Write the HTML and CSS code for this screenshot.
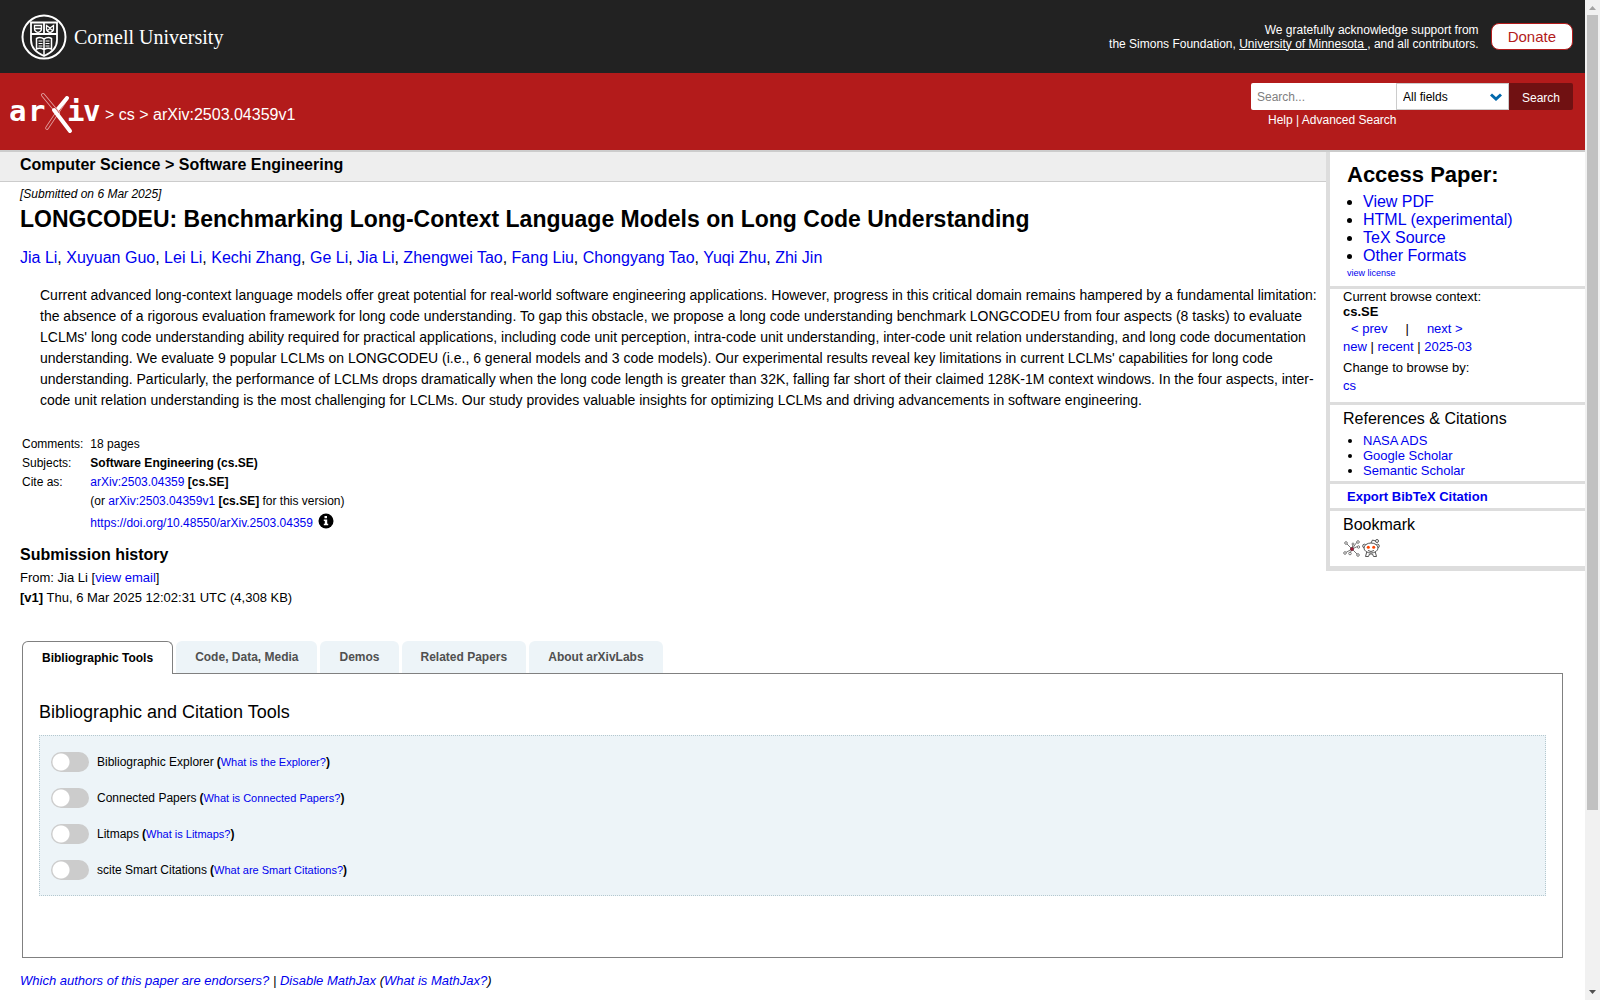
FILE: index.html
```
<!DOCTYPE html>
<html lang="en">
<head>
  <meta charset="UTF-8">
  <meta name="viewport" content="width=device-width, initial-scale=1.0">
  <title>[2503.04359v1] LONGCODEU: Benchmarking Long-Context Language Models on Long Code Understanding</title>
  <link rel="stylesheet" href="styles.css">
</head>
<body>
  <header>
    <div class="support-bar">
      <a class="cornell" href="#">
        <svg class="seal" viewBox="0 0 46 46" aria-hidden="true">
          <g fill="none" stroke="#fff">
            <circle cx="23" cy="23" r="21.500" stroke-width="2"/>
            <path d="M10 8.500H36V26C36 34 30 39 23 42C16 39 10 34 10 26Z" stroke-width="1.800"/>
            <path d="M10 20H36M23 9V20" stroke-width="1.800"/>
            <path d="M13.500 11.500H20.500V15Q20.500 17.500 17 18.500Q13.500 17.500 13.500 15ZM25.500 11.500L29 14L32.500 11.500V15Q32.500 17.500 29 18.500Q25.500 17.500 25.500 15ZM14 14.500H20M26.500 16.500L29 14.500L31.500 16.500" stroke-width="1.300"/>
            <path d="M23 25Q19 22.500 15.500 24.500V35Q19 33.500 23 35.500Q27 33.500 30.500 35V24.500Q27 22.500 23 25V41" stroke-width="1.500"/>
            <path d="M17.500 27H21.500M17.500 29.500H21.500M17.500 32H21.500M24.500 27H28.500M24.500 29.500H28.500M24.500 32H28.500"/>
          </g>
        </svg>
        <span>Cornell University</span>
      </a>
      <div class="support">
        <p>We gratefully acknowledge support from<br>the Simons Foundation, <a href="#">University of Minnesota </a>, and all contributors.</p>
        <a class="donate" href="#">Donate</a>
      </div>
    </div>
    <div class="brand-bar">
      <div class="breadcrumbs">
        <a href="#" aria-label="arXiv">
          <svg class="logo" viewBox="0 4 92 46" aria-hidden="true">
            <g class="logo-text">
              <text x="-1" y="33">a</text>
              <text x="18" y="33">r</text>
              <text x="57" y="33">i</text>
              <text x="73" y="33">v</text>
            </g>
            <g fill="none" stroke-linecap="round">
              <path d="M57 10L37 40" stroke="#e3a3a3" stroke-width="3.600"/>
              <path d="M57 10L37 40" stroke="#b31b1b" stroke-width="2"/>
              <path d="M57 10L47 22" stroke="#fff" stroke-width="4"/>
              <path d="M33 7L48 25" stroke="#e3a3a3" stroke-width="4"/>
              <path d="M33 7L48 25" stroke="#b31b1b" stroke-width="2.200"/>
              <path d="M44 22L60 43" stroke="#fff" stroke-width="4"/>
            </g>
          </svg>
        </a>
        <span>&gt; <a href="#">cs</a> &gt; arXiv:2503.04359v1</span>
      </div>
      <form class="search">
        <div class="search-row">
          <input type="text" placeholder="Search..." aria-label="Search term or terms">
          <div class="select">
            <select aria-label="Field to search">
              <option>All fields</option>
              <option>Title</option>
              <option>Author</option>
              <option>Abstract</option>
            </select>
            <svg viewBox="0 0 12 8" aria-hidden="true"><path d="M1 1.500L6 6L11 1.500" fill="none" stroke="#0068ac" stroke-width="3"/></svg>
          </div>
          <button type="button">Search</button>
        </div>
        <p><a href="#">Help</a> | <a href="#">Advanced Search</a></p>
      </form>
    </div>
  </header>

  <main>
    <div class="columns">
      <article>
        <h1 class="subject">Computer Science &gt; Software Engineering</h1>
        <div class="abs">
          <div class="dateline">[Submitted on 6 Mar 2025]</div>
          <h1 class="title">LONGCODEU: Benchmarking Long-Context Language Models on Long Code Understanding</h1>
          <div class="authors"><a href="#">Jia Li</a>, <a href="#">Xuyuan Guo</a>, <a href="#">Lei Li</a>, <a href="#">Kechi Zhang</a>, <a href="#">Ge Li</a>, <a href="#">Jia Li</a>, <a href="#">Zhengwei Tao</a>, <a href="#">Fang Liu</a>, <a href="#">Chongyang Tao</a>, <a href="#">Yuqi Zhu</a>, <a href="#">Zhi Jin</a></div>
          <blockquote>Current advanced long-context language models offer great potential for real-world software engineering applications. However, progress in this critical domain remains hampered by a fundamental limitation: the absence of a rigorous evaluation framework for long code understanding. To gap this obstacle, we propose a long code understanding benchmark LONGCODEU from four aspects (8 tasks) to evaluate LCLMs' long code understanding ability required for practical applications, including code unit perception, intra-code unit understanding, inter-code unit relation understanding, and long code documentation understanding. We evaluate 9 popular LCLMs on LONGCODEU (i.e., 6 general models and 3 code models). Our experimental results reveal key limitations in current LCLMs' capabilities for long code understanding. Particularly, the performance of LCLMs drops dramatically when the long code length is greater than 32K, falling far short of their claimed 128K-1M context windows. In the four aspects, inter-code unit relation understanding is the most challenging for LCLMs. Our study provides valuable insights for optimizing LCLMs and driving advancements in software engineering.</blockquote>
          <table class="meta">
            <tr><td>Comments:</td><td>18 pages</td></tr>
            <tr><td>Subjects:</td><td><b>Software Engineering (cs.SE)</b></td></tr>
            <tr><td>Cite as:</td><td><a href="#">arXiv:2503.04359</a> <b>[cs.SE]</b></td></tr>
            <tr><td></td><td>(or <a href="#">arXiv:2503.04359v1</a> <b>[cs.SE]</b> for this version)</td></tr>
            <tr><td></td><td><a href="#">https://doi.org/10.48550/arXiv.2503.04359</a>
              <svg class="info" viewBox="0 0 16 16" aria-hidden="true"><circle cx="8" cy="8" r="7.500"/><path d="M6.500 3H9V5.200H6.500ZM5.800 6.500H9.200V10.800H10.200V12.300H5.800V10.800H6.800V8H5.800Z" fill="#fff"/></svg>
            </td></tr>
          </table>
          <section class="history">
            <h2>Submission history</h2>
            <p>From: Jia Li [<a href="#">view email</a>]</p>
            <p><b>[v1]</b> Thu, 6 Mar 2025 12:02:31 UTC (4,308 KB)</p>
          </section>
        </div>
      </article>

      <aside>
        <section class="access">
          <h2>Access Paper:</h2>
          <ul>
            <li><a href="#">View PDF</a></li>
            <li><a href="#">HTML (experimental)</a></li>
            <li><a href="#">TeX Source</a></li>
            <li><a href="#">Other Formats</a></li>
          </ul>
          <a class="license" href="#">view license</a>
        </section>
        <section class="browse">
          <div>Current browse context:</div>
          <b>cs.SE</b>
          <div class="prevnext"><a href="#">&lt; prev</a><span>|</span><a href="#">next &gt;</a></div>
          <div class="list-links"><a href="#">new</a> | <a href="#">recent</a> | <a href="#">2025-03</a></div>
          <div class="switch">Change to browse by:</div>
          <a href="#">cs</a>
        </section>
        <section class="refs">
          <h3>References &amp; Citations</h3>
          <ul>
            <li><a href="#">NASA ADS</a></li>
            <li><a href="#">Google Scholar</a></li>
            <li><a href="#">Semantic Scholar</a></li>
          </ul>
        </section>
        <section class="export"><a href="#">Export BibTeX Citation</a></section>
        <section class="bookmark">
          <h3>Bookmark</h3>
          <div class="bookmark-icons">
            <a href="#" aria-label="Bookmark on BibSonomy">
              <svg viewBox="0 0 18 18" fill="none" stroke="#777"><path d="M3 4L9 10L15 16M2 14L9 10L14 3M7 14.500L9 10L15.500 7M10 5L9 10"/><g fill="#fff"><circle cx="3" cy="4" r="1.300"/><circle cx="15" cy="3" r="1.300"/><circle cx="2" cy="14" r="1.300"/><circle cx="7" cy="14.500" r="1.300"/><circle cx="15" cy="16" r="1.300"/><circle cx="10" cy="5" r="1"/><circle cx="15.500" cy="8" r="1.200"/></g><circle cx="9" cy="10" r="1.500" fill="#b13" stroke="#734"/></svg>
            </a>
            <a href="#" aria-label="Bookmark on Reddit">
              <svg viewBox="0 0 18 18" fill="#fff" stroke="#555"><path d="M5 12L3.500 17.500H6.500L7.500 15H10.500L11.500 17.500H14.500L13 12M9 4L10.500 1L13.500 2"/><circle cx="2.500" cy="7" r="1.800"/><circle cx="15.500" cy="7" r="1.800"/><circle cx="15" cy="2" r="1.500"/><ellipse cx="9" cy="9" rx="7" ry="5"/><path d="M6 11.500Q9 13.500 12 11.500" fill="none"/><g fill="#f40" stroke="none"><circle cx="6.300" cy="8.300" r="1.500"/><circle cx="11.700" cy="8.300" r="1.500"/></g></svg>
            </a>
          </div>
        </section>
      </aside>
    </div>

    <div class="labs">
      <div class="tabs" role="tablist">
        <button class="active" role="tab" aria-selected="true">Bibliographic Tools</button>
        <button role="tab">Code, Data, Media</button>
        <button role="tab">Demos</button>
        <button role="tab">Related Papers</button>
        <button role="tab">About arXivLabs</button>
      </div>
      <div class="tab-panel">
        <h2>Bibliographic and Citation Tools</h2>
        <div class="toggles">
          <div class="toggle"><input type="checkbox" id="bibex"><label for="bibex">Bibliographic Explorer</label> <b>(</b><a href="#">What is the Explorer?</a><b>)</b></div>
          <div class="toggle"><input type="checkbox" id="connected"><label for="connected">Connected Papers</label> <b>(</b><a href="#">What is Connected Papers?</a><b>)</b></div>
          <div class="toggle"><input type="checkbox" id="litmaps"><label for="litmaps">Litmaps</label> <b>(</b><a href="#">What is Litmaps?</a><b>)</b></div>
          <div class="toggle"><input type="checkbox" id="scite"><label for="scite">scite Smart Citations</label> <b>(</b><a href="#">What are Smart Citations?</a><b>)</b></div>
        </div>
      </div>
    </div>
    <div class="endorsers"><a href="#">Which authors of this paper are endorsers?</a> | <a href="#">Disable MathJax</a> (<a href="#">What is MathJax?</a>)</div>
  </main>

  <div class="scrollbar" aria-hidden="true">
    <svg viewBox="0 0 15 15"><path d="M4 10L7.500 6L11 10Z" fill="#a3a3a3"/></svg>
    <div class="track"><div class="thumb"></div></div>
    <svg viewBox="0 0 15 15"><path d="M4 5L11 5L7.500 9Z" fill="#505050"/></svg>
  </div>
</body>
</html>
```
FILE: styles.css
```
* {
  box-sizing: border-box;
}
body {
  margin: 0;
  padding-right: 15px;
  height: 100vh;
  overflow: hidden;
  background: #fff;
  color: #000;
  font-family: "Liberation Sans", Arial, sans-serif;
  font-size: 13px;
  line-height: 15px;
}
a {
  color: #0000ee;
  text-decoration: none;
}
h1, h2, h3, p, ul, blockquote {
  margin: 0;
  padding: 0;
}

/* header */
.support-bar {
  display: flex;
  justify-content: space-between;
  align-items: center;
  height: 73px;
  padding: 0 12px 0 21px;
  background: #222;
  color: #fff;
}
.cornell {
  display: flex;
  align-items: center;
  gap: 7px;
  color: #fff;
  font-family: "Liberation Serif", serif;
  font-size: 20px;
  line-height: 24px;
}
.seal {
  width: 46px;
  height: 46px;
}
.support {
  display: flex;
  align-items: center;
  gap: 12px;
  font-size: 12px;
  line-height: 14px;
  text-align: right;
}
.support p a {
  color: #fff;
  text-decoration: underline;
}
.donate {
  padding: 0 16px;
  border: 1px solid #b31b1b;
  border-radius: 8px;
  background: #fff;
  color: #b31b1b;
  font-size: 15px;
  line-height: 25px;
}
.brand-bar {
  display: flex;
  justify-content: space-between;
  height: 79px;
  padding: 10px 12px 0 10px;
  border-bottom: 2px solid #ccc;
  background: #b31b1b;
  color: #fff;
}
.brand-bar a {
  color: #fff;
}
.breadcrumbs {
  display: flex;
  align-items: center;
  gap: 3px;
  height: 64px;
  font-size: 16px;
  line-height: 18px;
}
.logo {
  display: block;
  width: 92px;
  height: 46px;
}
.logo-text {
  fill: #fff;
  font-family: "DejaVu Sans Mono", monospace;
  font-size: 29px;
  font-weight: bold;
}
.search {
  width: 322px;
  font-size: 12px;
}
.search-row {
  display: flex;
  height: 27px;
}
.search input {
  flex: 1;
  min-width: 0;
  padding: 2px 6px 0;
  border: 0;
  border-radius: 2px 0 0 2px;
  font: inherit;
}
.search input::placeholder {
  color: #808080;
}
.select {
  position: relative;
  width: 113px;
}
.select select {
  width: 100%;
  height: 27px;
  padding: 2px 6px 0;
  border: 1px solid #ccc;
  border-radius: 0;
  background: #fff;
  color: #000;
  font: inherit;
  appearance: none;
}
.select svg {
  position: absolute;
  top: 10px;
  right: 7px;
  width: 12px;
  height: 8px;
}
.search button {
  width: 64px;
  padding: 3px 0 0;
  border: 0;
  border-radius: 0 2px 2px 0;
  background: #701112;
  color: #fff;
  font: inherit;
}
.search p {
  padding: 3px 0 0 17px;
}

/* abstract */
.columns {
  display: flex;
  align-items: flex-start;
}
article {
  flex: 1;
  min-width: 0;
}
.subject {
  padding: 4px 20px 7px;
  border-bottom: 1px solid #ccc;
  background: #eee;
  font-size: 16px;
  line-height: 18px;
}
.abs {
  padding: 4px 0 0 20px;
}
.dateline {
  font-size: 12px;
  font-style: italic;
  line-height: 16px;
}
.title {
  padding: 4px 0 12px;
  font-size: 23px;
  line-height: 26px;
}
.authors {
  padding: 4px 0 0;
  font-size: 16px;
  line-height: 20px;
}
blockquote {
  padding: 17px 4px 23px 20px;
  font-size: 14px;
  line-height: 21px;
}
.meta {
  border-spacing: 2px;
  font-size: 12px;
  line-height: 15px;
}
.meta td {
  padding: 1px 5px 1px 0;
}
.info {
  width: 16px;
  height: 16px;
  margin-left: 2px;
  vertical-align: -2px;
}
.history h2 {
  padding: 11px 0 3px;
  font-size: 16px;
  line-height: 20px;
}
.history p {
  line-height: 20px;
}

/* sidebar */
aside {
  width: 259px;
  border-left: 4px solid #ddd;
  border-bottom: 2px solid #ddd;
}
aside section {
  padding: 0 13px;
  border-bottom: 3px solid #ddd;
}
aside ul {
  padding-left: 20px;
}
.access {
  padding: 9px 17px 4px;
  font-size: 16px;
  line-height: 18px;
}
.access h2 {
  padding-bottom: 4px;
  font-size: 22px;
  line-height: 28px;
}
.access ul {
  padding-left: 16px;
}
.license {
  display: block;
  font-size: 9px;
  line-height: 17px;
}
.prevnext {
  display: flex;
  gap: 18px;
  padding: 2px 8px 0;
}
.list-links, .switch {
  padding: 3px 0;
}
.browse {
  padding-bottom: 9px;
}
aside h3 {
  padding: 5px 0;
  font-size: 16px;
  font-weight: normal;
  line-height: 18px;
}
.refs {
  padding-bottom: 3px;
}
.export {
  padding: 5px 17px 4px;
  font-weight: bold;
}
.bookmark {
  padding-bottom: 9px;
}
.bookmark-icons {
  display: flex;
  gap: 1px;
}
.bookmark svg {
  display: block;
  width: 18px;
  height: 18px;
}

/* labs tabs */
.labs {
  padding: 33px 22px 0;
}
.tabs {
  display: flex;
  gap: 3px;
}
.tabs button {
  height: 32px;
  padding: 0 19px;
  border: 0;
  border-radius: 6px 6px 0 0;
  background: #edf4f8;
  color: #505050;
  font: bold 12px "Liberation Sans", Arial, sans-serif;
}
.tabs .active {
  height: 33px;
  margin-bottom: -1px;
  border: 1px solid #808080;
  border-bottom: 0;
  background: #fff;
  color: #000;
  z-index: 1;
}
.tab-panel {
  padding: 26px 16px 61px;
  border: 1px solid #808080;
}
.tab-panel h2 {
  padding-bottom: 11px;
  font-size: 18px;
  font-weight: normal;
  line-height: 24px;
}
.toggles {
  display: flex;
  flex-direction: column;
  gap: 16px;
  padding: 16px 11px 15px;
  border: 1px dotted #b4c8cf;
  background: #edf4f8;
}
.toggle {
  display: flex;
  align-items: center;
  font-size: 12px;
  line-height: 20px;
}
.toggle input {
  width: 38px;
  height: 20px;
  margin: 0 8px 0 0;
  border-radius: 10px;
  background: radial-gradient(circle at 10px 10px, #fff 8px, #ccc 9px);
  appearance: none;
}
.toggle label {
  margin-right: 3px;
}
.toggle a {
  font-size: 11px;
}
.endorsers {
  padding: 15px 20px;
  font-style: italic;
}

/* page scrollbar */
.scrollbar {
  position: fixed;
  top: 0;
  right: 0;
  bottom: 0;
  display: flex;
  flex-direction: column;
  width: 15px;
  background: #f1f1f1;
}
.track {
  flex: 1;
  padding: 0 2px;
}
.thumb {
  height: 82%;
  background: #c1c1c1;
}
```
